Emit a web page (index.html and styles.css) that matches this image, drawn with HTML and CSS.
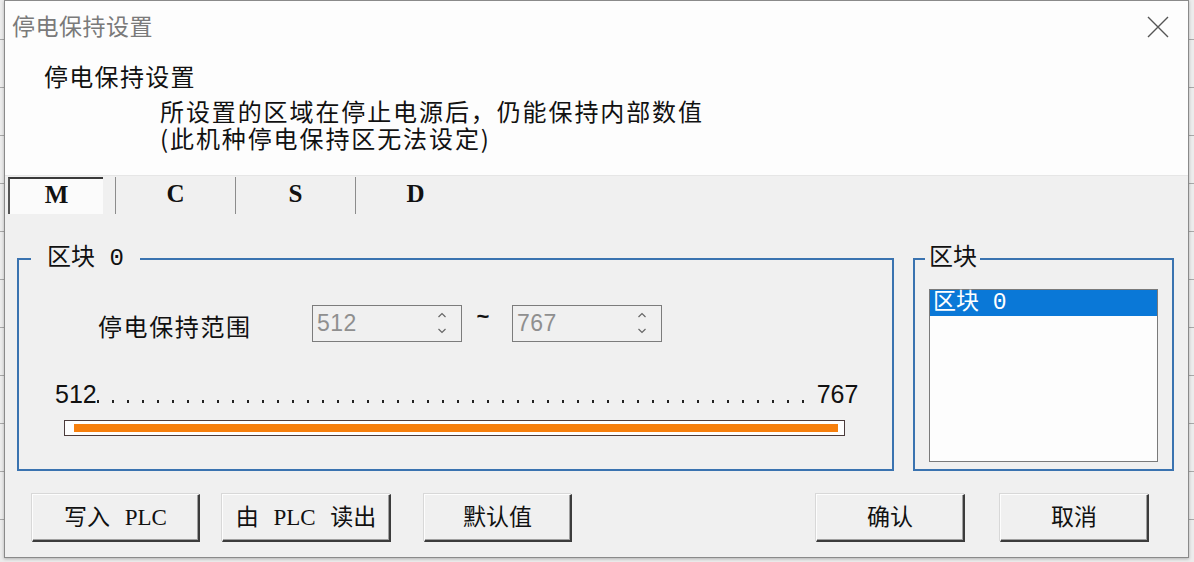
FILE: index.html
```html
<!DOCTYPE html>
<html lang="zh-CN">
<head>
<meta charset="utf-8">
<title>停电保持设置</title>
<link rel="stylesheet" href="styles.css">
</head>
<body>
<div class="desk">
  <div class="dialog">
    <div class="titlebar">
      <span class="title">停电保持设置</span>
      <svg class="close" width="22" height="22" viewBox="0 0 22 22"><path d="M1 1 L21 21 M21 1 L1 21" stroke="#555" stroke-width="1.4" fill="none"/></svg>
    </div>
    <div class="header">
      <div class="heading">停电保持设置</div>
      <div class="desc">
        <div class="desc-line">所设置的区域在停止电源后，仍能保持内部数值</div>
        <div class="desc-line">(此机种停电保持区无法设定)</div>
      </div>
    </div>
    <div class="body">
      <div class="tabs">
        <div class="tab first"><span class="tab-sel">M</span></div>
        <div class="tab">C</div>
        <div class="tab">S</div>
        <div class="tab">D</div>
      </div>
      <div class="groups">
        <fieldset class="grp grp-main">
          <legend class="lg-main">区块 0</legend>
          <div class="range-row">
            <span class="range-label">停电保持范围</span>
            <div class="spin"><span class="spin-val">512</span><svg class="arrows" width="10" height="26" viewBox="0 0 10 26"><path d="M1.5 7 L5 3.5 L8.5 7 M1.5 19 L5 22.5 L8.5 19" stroke="#666" stroke-width="1.2" fill="none"/></svg></div>
            <span class="tilde">~</span>
            <div class="spin"><span class="spin-val">767</span><svg class="arrows" width="10" height="26" viewBox="0 0 10 26"><path d="M1.5 7 L5 3.5 L8.5 7 M1.5 19 L5 22.5 L8.5 19" stroke="#666" stroke-width="1.2" fill="none"/></svg></div>
          </div>
          <div class="scale">
            <span class="s-num">512</span><span class="dots"></span><span class="s-num s-end">767</span>
          </div>
          <div class="bar"><div class="fill"></div></div>
        </fieldset>
        <fieldset class="grp grp-side">
          <legend class="lg-side">区块</legend>
          <div class="list">
            <div class="item sel">区块 0</div>
          </div>
        </fieldset>
      </div>
      <div class="buttons">
        <button class="btn b1">写入 PLC</button>
        <button class="btn b2">由 PLC 读出</button>
        <button class="btn b3">默认值</button>
        <button class="btn b4">确认</button>
        <button class="btn b5">取消</button>
      </div>
    </div>
  </div>
</div>
</body>
</html>
```
FILE: styles.css
```css
* { box-sizing: border-box; }
html, body { margin: 0; padding: 0; }
body {
  width: 1194px;
  height: 562px;
  overflow: hidden;
  font-family: "Noto Sans CJK SC", sans-serif;
  background: #ececec;
}
.desk {
  height: 562px;
  padding: 0 5px 0 4px;
  background-color: #ececec;
  background-image: repeating-linear-gradient(to bottom, transparent 0, transparent 47px, #a8a8a8 47px, #a8a8a8 48px);
  background-position: 0 -8px;
}
.dialog {
  width: 1185px;
  height: 558px;
  border: 1px solid #8a8a8a;
  background: #f0f0f0;
  box-shadow: 0 1px 3px rgba(0,0,0,0.25);
  display: flex;
  flex-direction: column;
}
.titlebar {
  height: 47px;
  background: #fdfdfd;
  display: flex;
  align-items: center;
  justify-content: space-between;
  padding: 0 19px 0 7px;
}
.title {
  font-size: 23px;
  color: #7a7a7a;
  letter-spacing: 0.5px;
  line-height: 30px;
}
.close { margin-top: 4px; }
.header {
  height: 127px;
  background: #fdfdfd;
  padding: 13px 0 0 39px;
  color: #111;
}
.heading {
  font-size: 24px;
  line-height: 30px;
  letter-spacing: 1.3px;
}
.desc {
  margin: 6px 0 0 116px;
  font-size: 24px;
  letter-spacing: 1.9px;
}
.desc-line {
  height: 27px;
  line-height: 27px;
}
.body {
  flex: 1;
  display: flex;
  flex-direction: column;
  border-top: 1px solid #e6e6e6;
}
.tabs {
  display: flex;
  height: 38px;
  font-family: "Liberation Serif", serif;
  font-weight: bold;
  font-size: 25px;
  color: #111;
}
.tab {
  width: 120px;
  border-left: 1px solid #8c8c8c;
  margin-top: 1px;
  display: flex;
  align-items: center;
  justify-content: center;
  padding-bottom: 3px;
}
.tab.first {
  width: 110px;
  border-left: none;
  margin-top: 0;
  justify-content: flex-start;
  padding-left: 3px;
  padding-bottom: 0;
}
.tab-sel {
  width: 95px;
  height: 37px;
  background: #fbfbfb;
  border-top: 2px solid #3a3a3a;
  border-left: 2px solid #555;
  display: flex;
  align-items: center;
  justify-content: center;
  padding-bottom: 3px;
}
.groups {
  display: flex;
  margin-top: 31px;
  padding-left: 12px;
  gap: 19px;
}
.grp {
  margin: 0;
  padding: 0;
  border: 2px solid #3a73b0;
  height: 226px;
  min-width: 0;
}
.grp legend {
  font-size: 24px;
  line-height: 28px;
  color: #111;
  font-family: "Liberation Mono", "Noto Sans CJK SC", monospace;
}
.grp-main { width: 877px; }
.grp-side { width: 261px; }
.lg-main { margin-left: 12px; padding: 0 16px; }
.lg-side { margin-left: 10px; padding: 0 3px 0 4px; }
.range-row {
  display: flex;
  align-items: center;
  margin-top: 32px;
  padding-left: 79px;
  height: 36px;
}
.range-label {
  width: 214px;
  font-size: 24px;
  letter-spacing: 1.6px;
  color: #111;
  padding-top: 5px;
}
.spin {
  width: 150px;
  height: 37px;
  border: 1px solid #7c7c7c;
  background: #f0f0f0;
  display: flex;
  align-items: center;
  justify-content: space-between;
  padding: 0 14px 0 4px;
}
.spin-val {
  font-family: "Liberation Sans", sans-serif;
  font-size: 23px;
  color: #8f8f8f;
  letter-spacing: 0.5px;
}
.tilde {
  width: 50px;
  text-align: center;
  font-family: "Liberation Sans", sans-serif;
  font-weight: bold;
  font-size: 22px;
  color: #111;
  padding-right: 8px;
  margin-top: -12px;
}
.scale {
  display: flex;
  align-items: baseline;
  margin-top: 40px;
  padding-left: 36px;
  height: 28px;
}
.s-num {
  font-family: "Liberation Sans", sans-serif;
  font-size: 25px;
  line-height: 26px;
  color: #111;
}
.dots {
  display: inline-block;
  width: 719px;
  height: 3px;
  background-image: linear-gradient(to right, #222 0, #222 2px, transparent 2px);
  background-size: 15px 3px;
  background-repeat: repeat-x;
  margin-right: -5px;
}
.s-end { margin-left: 6px; }
.bar {
  margin: 11px 0 0 45px;
  width: 781px;
  height: 16px;
  border: 1px solid #4b3b3b;
  background: #fefefe;
  padding: 3px 6px 3px 9px;
}
.fill {
  height: 8px;
  background: #f77f0c;
}
.list {
  margin: 16px 0 0 14px;
  width: 229px;
  height: 173px;
  border: 1px solid #7a7a7a;
  background: #fdfdfd;
}
.item {
  height: 26px;
  line-height: 26px;
  padding-left: 3px;
  font-family: "Liberation Mono", "Noto Sans CJK SC", monospace;
  font-size: 23px;
}
.item.sel {
  background: #0a78d7;
  color: #fff;
}
.buttons {
  display: flex;
  margin-top: 23px;
  padding-left: 27px;
}
.btn {
  height: 48px;
  margin: 0;
  padding: 0 0 6px 0;
  background: #f0f0f0;
  border-top: 1px solid #fdfdfd;
  border-left: 1px solid #fdfdfd;
  border-right: 2px solid #3c3c3c;
  border-bottom: 2px solid #3c3c3c;
  box-shadow: inset -1px -1px 0 #a0a0a0, -1px -1px 0 #d8d8d8;
  font-family: "Liberation Serif", "Noto Sans CJK SC", serif;
  font-size: 23px;
  word-spacing: 9px;
  color: #111;
  text-align: center;
}
.b1 { width: 168px; }
.b2 { width: 169px; margin-left: 22px; }
.b3 { width: 148px; margin-left: 33px; }
.b4 { width: 149px; margin-left: 244px; }
.b5 { width: 149px; margin-left: 35px; }
```
